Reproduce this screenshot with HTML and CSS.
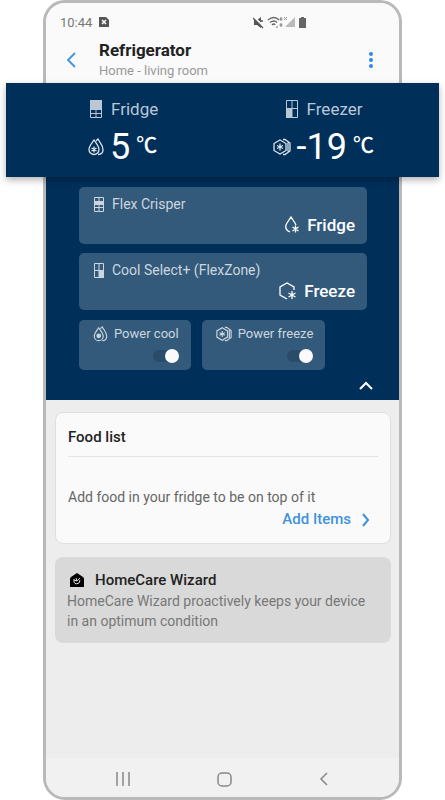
FILE: index.html
```html
<!DOCTYPE html>
<html lang="en">
<head>
<meta charset="utf-8">
<meta name="viewport" content="width=device-width, initial-scale=1">
<title>Refrigerator</title>
<link rel="stylesheet" href="styles.css">
</head>
<body>

<svg class="defs" aria-hidden="true">
    <symbol id="drops" viewBox="0 0 16 18">
        <path d="M6 2C4 5 1 8 1 11.500a5 5 0 0 0 10 0C11 8 8 5 6 2z"/>
        <path d="M8 3l2-2c2 4 5 6 5 10.500 0 3-2 5-5 5"/>
        <path d="M6 8.500v6M3.500 10l5 3M8.500 10l-5 3"/>
    </symbol>
    <symbol id="power-drops" viewBox="0 0 16 18">
        <path d="M6 2C4 5 1 8 1 11.500a5 5 0 0 0 10 0C11 8 8 5 6 2z"/>
        <path d="M8 3l2-2c2 4 5 6 5 10.500 0 3-2 5-5 5"/>
        <circle cx="6" cy="11" r="2" fill="currentColor"/>
    </symbol>
    <symbol id="hexes" viewBox="0 0 18 18">
        <path d="M7 2l6 3.500v7L7 16l-6-3.500v-7z"/>
        <path d="M10 1.500h2l5 3.500v8l-5 3.500h-2M15 4.500v9"/>
        <path d="M7 5.500v7M4 7.500l6 3M10 7.500l-6 3"/>
    </symbol>
</svg>

<div class="phone">
    <header>
        <div class="status">
            <span>10:44</span>
            <svg width="10" height="12" viewBox="0 0 10 12"><path d="M0 1h7l3 3v7H0z" fill="#555"/><path d="M3 4l4 4M7 4L3 8" stroke="#fff" stroke-width="1.500"/></svg>
            <svg class="signals" width="54" height="13" viewBox="0 0 54 13">
                <path d="M1 4h3l4-3v11L4 9H1z" fill="#555"/>
                <path d="M1 1l10 10" stroke="#fafafa" stroke-width="2"/>
                <path d="M0 2l10 10M8 5h2" stroke="#555" stroke-width="1.300"/>
                <path d="M15 4q6-5 11 0M17 6.500q4-3 7 0M19 9q2-2 3 0" fill="none" stroke="#666" stroke-width="1.400"/>
                <path d="M28 1v4M26.500 3h3M28 7v4M26.500 9h3M23 11h2" stroke="#777"/>
                <path d="M42 1v10H32z" fill="#bbb"/>
                <path d="M31 1l3 3M34 1l-3 3" stroke="#999"/>
                <path d="M46 2h2V1h3v1h2v10h-7z" fill="#666"/>
            </svg>
        </div>
        <div class="title-bar">
            <button class="back" aria-label="Back"><svg width="10" height="16" viewBox="0 0 10 16"><path d="M9 1L2 8l7 7" fill="none" stroke="#3d93dc" stroke-width="1.800"/></svg></button>
            <div class="title">
                <h1>Refrigerator</h1>
                <p>Home - living room</p>
            </div>
            <button class="more" aria-label="More options"><svg width="4" height="16" viewBox="0 0 4 16" fill="#2b8be0"><circle cx="2" cy="2" r="2"/><circle cx="2" cy="8" r="2"/><circle cx="2" cy="14" r="2"/></svg></button>
        </div>
    </header>

    <section class="temps">
        <div class="temp">
            <h2>
                <svg width="12" height="18" viewBox="0 0 12 18"><path d="M.5.5h11v17H.5zM6 10v7M0 13.500h12" fill="none" stroke="currentColor"/><path d="M0 0h12v10H0z" fill="currentColor"/></svg>
                Fridge
            </h2>
            <p><svg class="line" width="16" height="18"><use href="#drops"/></svg><span class="value">5</span><span class="unit">℃</span></p>
        </div>
        <div class="temp">
            <h2 class="indent">
                <svg width="12" height="18" viewBox="0 0 12 18"><path d="M.5.5h11v17H.5zM6 0v18M0 8.500h12" fill="none" stroke="currentColor"/><path d="M0 9h6v9H0z" fill="currentColor"/></svg>
                Freezer
            </h2>
            <p><svg class="line" width="18" height="18"><use href="#hexes"/></svg><span class="value">-19</span><span class="unit">℃</span></p>
        </div>
    </section>

    <section class="zones">
        <div class="zone">
            <h3>
                <svg width="10" height="15" viewBox="0 0 10 15"><path d="M.5.5h9v14h-9zM5 0v15M0 10.500h10" fill="none" stroke="currentColor"/><path d="M0 4h10v4H0z" fill="currentColor"/></svg>
                Flex Crisper
            </h3>
            <p>
                <svg class="line" width="15" height="18" viewBox="0 0 15 18"><path d="M5 16C0 14 0 10 2 7l4-6 4 6 1 2M10.500 9.500v7M7.500 11l6 4M13.500 11l-6 4"/></svg>
                Fridge
            </p>
        </div>
        <div class="zone">
            <h3>
                <svg width="10" height="15" viewBox="0 0 10 15"><path d="M.5.5h9v14h-9zM5 0v15M0 7.500h10" fill="none" stroke="currentColor"/><path d="M5 7h5v8H5z" fill="currentColor"/></svg>
                Cool Select+ (FlexZone)
            </h3>
            <p>
                <svg class="line" width="18" height="18" viewBox="0 0 18 18"><path d="M8 17l-7-4V5l7-4 7 4v3M13 9v8M9.500 11l7 4M16.500 11l-7 4"/></svg>
                Freeze
            </p>
        </div>
        <div class="powers">
            <label class="power">
                <span><svg class="line" width="15" height="16"><use href="#power-drops"/></svg>Power cool</span>
                <input type="checkbox" role="switch" checked>
            </label>
            <label class="power">
                <span><svg class="line" width="16" height="16"><use href="#hexes"/></svg>Power freeze</span>
                <input type="checkbox" role="switch" checked>
            </label>
        </div>
        <button class="collapse" aria-label="Collapse"><svg width="14" height="9" viewBox="0 0 14 9"><path d="M1 8l6-6 6 6" fill="none" stroke="#fff" stroke-width="2"/></svg></button>
    </section>

    <main>
        <section class="food">
            <h2>Food list</h2>
            <p>Add food in your fridge to be on top of it</p>
            <a href="#">Add Items <svg width="8" height="14" viewBox="0 0 8 14"><path d="M1 1l5 6-5 6" fill="none" stroke="#3d93dc" stroke-width="2"/></svg></a>
        </section>
        <section class="wizard">
            <h2>
                <svg width="14" height="14" viewBox="0 0 14 14"><path d="M7 0l6 4q1 1 1 2v8H0V6q0-1 1-2z"/><path d="M4 6q-1 4 2 5 4 0 4-4M6 5l1 3 3-3M4 7l3 1" fill="none" stroke="#ddd"/></svg>
                HomeCare Wizard
            </h2>
            <p>HomeCare Wizard proactively keeps your device in an optimum condition</p>
        </section>
    </main>

    <nav>
        <button aria-label="Recent apps"><svg width="14" height="14" viewBox="0 0 14 14"><path d="M1 0v14M7 0v14M13 0v14"/></svg></button>
        <button aria-label="Home"><svg width="15" height="15" viewBox="0 0 15 15"><rect x="1" y="1" width="13" height="13" rx="4"/></svg></button>
        <button aria-label="Back"><svg width="9" height="14" viewBox="0 0 9 14"><path d="M8 1L2 7l6 6"/></svg></button>
    </nav>
</div>

</body>
</html>
```
FILE: styles.css
```css
* {
    box-sizing: border-box;
}

body {
    margin: 0;
    padding: 0 43px;
    font-family: Roboto, Arial, sans-serif;
    background-color: white;
    overflow-x: hidden;
}

h1, h2, h3, p {
    margin: 0;
    font-weight: 400;
}

button {
    display: flex;
    align-items: center;
    justify-content: center;
    padding: 0;
    border: 0;
    background: none;
}

svg {
    flex: none;
}

.defs {
    position: absolute;
    width: 0;
    height: 0;
}

.line {
    fill: none;
    stroke: currentColor;
    stroke-width: 1.3;
}

.phone {
    display: flex;
    flex-direction: column;
    min-height: 100vh;
    border: 3px solid #b9b9b9;
    border-radius: 22px;
    background-color: #ededed;
}

header {
    height: 80px;
    padding: 10px 26px 0 14px;
    border-radius: 19px 19px 0 0;
    background-color: #fafafa;
}

.status {
    display: flex;
    align-items: center;
    gap: 7px;
    height: 18px;
    font-size: 13px;
    color: #777;
}

.signals {
    margin-left: auto;
    margin-right: 66px;
}

.title-bar {
    display: flex;
    align-items: center;
    height: 58px;
}

.back {
    width: 22px;
}

.title {
    flex: 1;
    padding-left: 17px;
}

.title h1 {
    font-size: 17px;
    line-height: 22px;
    font-weight: 700;
    color: #222;
}

.title p {
    font-size: 13px;
    line-height: 20px;
    color: #999;
}

/* wider than the phone on both sides */
.temps {
    position: relative;
    display: grid;
    grid-template-columns: 1fr auto;
    margin: 0 -40px;
    padding: 14px 65px 4px 82px;
    color: white;
    background-color: #002f5a;
    box-shadow: 0 3px 7px rgba(0, 0, 0, 0.3);
}

.temp h2 {
    display: flex;
    align-items: center;
    gap: 9px;
    padding-left: 2px;
    font-size: 17px;
    line-height: 24px;
    color: #b9c7d6;
}

.temp h2.indent {
    padding-left: 13px;
}

.temp p {
    display: flex;
    align-items: center;
    gap: 6px;
    height: 52px;
}

.temp .line {
    color: #dde4ec;
}

.value {
    font-size: 36px;
}

.unit {
    align-self: flex-start;
    padding-top: 7px;
    font-family: "Noto Sans CJK KR", sans-serif;
    font-size: 21px;
    line-height: 30px;
    font-weight: 500;
}

.zones {
    padding: 10px 32px 0 33px;
    background-color: #002f5a;
}

.zone {
    display: flex;
    flex-direction: column;
    margin-bottom: 9px;
    padding: 7px 12px 8px 15px;
    border-radius: 5px;
    background-color: #335a7b;
}

.zone h3 {
    display: flex;
    align-items: center;
    gap: 8px;
    font-size: 14px;
    line-height: 20px;
    color: #ccd6df;
}

.zone p {
    display: flex;
    align-items: center;
    justify-content: flex-end;
    gap: 7px;
    font-size: 17px;
    line-height: 22px;
    font-weight: 500;
    color: white;
}

.powers {
    display: flex;
    gap: 11px;
    padding-top: 1px;
}

.power {
    display: flex;
    flex-direction: column;
    align-items: flex-end;
    gap: 5px;
    height: 50px;
    padding: 5px 12px 0 14px;
    border-radius: 5px;
    color: #ccd6df;
    background-color: #335a7b;
}

.power span {
    display: flex;
    align-items: center;
    gap: 6px;
    font-size: 13px;
    line-height: 18px;
    white-space: nowrap;
}

.power input {
    appearance: none;
    display: flex;
    justify-content: flex-end;
    align-items: center;
    width: 26px;
    height: 12px;
    margin: 2px 0 0;
    border-radius: 6px;
    background-color: #294c6b;
}

.power input:not(:checked) {
    justify-content: flex-start;
}

.power input::before {
    content: "";
    width: 14px;
    height: 14px;
    flex: none;
    border-radius: 50%;
    background-color: #fafafa;
}

.collapse {
    width: 26px;
    height: 30px;
    margin: 0 -12px 0 auto;
}

main {
    flex: 1;
    padding: 12px 8px 20px 9px;
}

.food {
    padding: 0 12px 11px;
    border: 1px solid #e0e0e0;
    border-radius: 8px;
    background-color: #fafafa;
}

.food h2 {
    padding: 14px 0 9px;
    border-bottom: 1px solid #e4e4e4;
    font-size: 15px;
    line-height: 20px;
    font-weight: 500;
    color: #222;
}

.food p {
    padding-top: 30px;
    font-size: 14px;
    line-height: 20px;
    color: #666;
}

.food a {
    display: flex;
    align-items: center;
    justify-content: flex-end;
    gap: 11px;
    padding-right: 8px;
    font-size: 15px;
    line-height: 25px;
    font-weight: 500;
    color: #3d93dc;
    text-decoration: none;
}

.wizard {
    margin-top: 13px;
    padding: 12px;
    border-radius: 8px;
    background-color: #d9d9d9;
}

.wizard h2 {
    display: flex;
    align-items: center;
    gap: 11px;
    padding-left: 3px;
    font-size: 15px;
    line-height: 22px;
    font-weight: 500;
    color: #222;
}

.wizard p {
    font-size: 14px;
    line-height: 20px;
    color: #777;
}

nav {
    display: flex;
    justify-content: space-between;
    align-items: center;
    height: 39px;
    padding: 3px 71px 0 70px;
    border-radius: 0 0 19px 19px;
    background-color: #f1f1f1;
}

nav svg {
    fill: none;
    stroke: #888;
    stroke-width: 1.5;
}
```
